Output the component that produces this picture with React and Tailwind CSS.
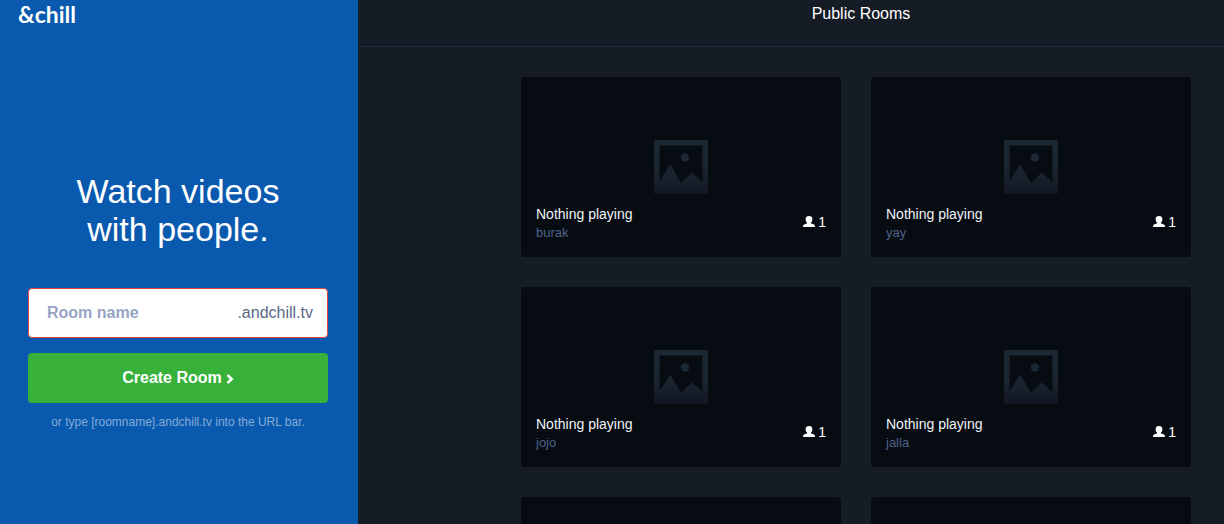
import { useId } from 'react';

const rooms = [
  { id: 1, name: 'burak', viewers: 1 },
  { id: 2, name: 'yay', viewers: 1 },
  { id: 3, name: 'jojo', viewers: 1 },
  { id: 4, name: 'jalla', viewers: 1 },
];

function PictureIcon() {
  const fill = useId();
  return (
    <svg viewBox="0 0 54 54" className="size-[54px]" aria-hidden="true">
      <defs>
        <linearGradient id={fill} x1="0" y1="0" x2="0" y2="1">
          <stop offset="0" stopColor="#1c2935" />
          <stop offset="0.5" stopColor="#1b2631" />
          <stop offset="1" stopColor="#121823" />
        </linearGradient>
      </defs>
      <path
        fill={`url(#${fill})`}
        fillRule="evenodd"
        d="M2 0H52Q54 0 54 2V52Q54 54 52 54H2Q0 54 0 52V2Q0 0 2 0ZM5.500 5.500V41L16.300 24.500L27 43L37.700 32.500L48.500 42V5.500Z"
      />
      <circle cx="31" cy="17.500" r="4.200" fill="#1b2732" />
    </svg>
  );
}

function PersonIcon() {
  return (
    <svg viewBox="0 0 12 11" className="mb-0.5 h-[11px] w-3" fill="currentColor" aria-hidden="true">
      <path d="M6 0C8.200 0 9.400 1.200 9.400 3.200C9.400 4.800 8.800 5.800 8 6.500V7.300C8.800 7.900 11 8.100 11.600 9.100C11.900 9.600 12 10.300 12 11H0C0 10.300 .1 9.600 .4 9.100C1 8.100 3.200 7.900 4 7.300V6.500C3.200 5.800 2.600 4.800 2.600 3.200C2.600 1.200 3.800 0 6 0Z" />
    </svg>
  );
}

function RoomCard({ room }) {
  return (
    <a href={`#${room.name}`} className="relative flex h-[180px] w-80 items-center justify-center rounded-[3px] bg-[#070b12]">
      <PictureIcon />
      <div className="absolute inset-x-0 bottom-0 flex items-start justify-between px-[15px] pb-4">
        <div>
          <h2 className="text-sm leading-[19px] text-[#f0f3f7]">Nothing playing</h2>
          <p className="text-[13px] leading-[17px] text-[#50648a]">{room.name}</p>
        </div>
        <span className="mt-[7px] flex items-center gap-[3px] text-sm text-white">
          <PersonIcon />
          {room.viewers}
        </span>
      </div>
    </a>
  );
}

function EmptyCard() {
  return (
    <div className="flex h-[180px] w-80 items-center justify-center rounded-[3px] bg-[#070b12]">
      <PictureIcon />
    </div>
  );
}

export default function App() {
  return (
    <div className="flex h-screen bg-[#151c26] font-['Liberation_Sans',Arial,sans-serif]">
      <aside className="flex w-[358px] shrink-0 flex-col bg-[#0959ae] text-white">
        <header className="flex px-[18px] pt-0.5">
          <a href="#home" className="font-[Lato,sans-serif] text-[23px] leading-6 font-bold">&amp;chill</a>
        </header>
        <div className="flex grow flex-col justify-center pt-[52px] pr-[30px] pl-7">
          <h1 className="text-center text-[34px] leading-[38px]">
            Watch videos
            <br />
            with people.
          </h1>
          <form className="mt-10" onSubmit={(e) => e.preventDefault()}>
            <div className="flex h-[50px] items-center rounded-[4px] border border-[#e2493c] bg-white pr-3.5 pl-[18px]">
              <input
                id="room"
                type="text"
                aria-label="Room name"
                placeholder="Room name"
                className="min-w-0 grow font-bold text-[#39466b] outline-none placeholder:text-[#98a3c4]"
              />
              <label htmlFor="room" className="text-[#5a6885]">.andchill.tv</label>
            </div>
            <button type="submit" className="mt-[15px] flex h-[50px] w-full items-center justify-center gap-1 rounded-[4px] bg-[#37b139] font-bold">
              Create Room
              <svg viewBox="0 0 8 10" className="mt-0.5 h-2.5 w-2" fill="none" stroke="currentColor" strokeWidth="2.500" aria-hidden="true">
                <path d="M1.500 1L5.700 5L1.500 9" />
              </svg>
            </button>
          </form>
          <p className="mt-2.5 text-center text-xs leading-[18px] text-[#84acd7]">or type [roomname].andchill.tv into the URL bar.</p>
        </div>
      </aside>
      <main className="flex min-w-0 grow flex-col">
        <header className="border-b border-[#222e3d] pt-0.5 pb-5 pl-[140px] text-center text-white">
          <h2 className="leading-6">Public Rooms</h2>
        </header>
        <div className="grow overflow-y-auto py-[30px] pr-2.5 pl-[140px] [scrollbar-width:none]">
          <div className="flex flex-wrap justify-center gap-[30px]">
            {rooms.map((room) => (
              <RoomCard key={room.id} room={room} />
            ))}
            <EmptyCard />
            <EmptyCard />
          </div>
        </div>
      </main>
    </div>
  );
}
